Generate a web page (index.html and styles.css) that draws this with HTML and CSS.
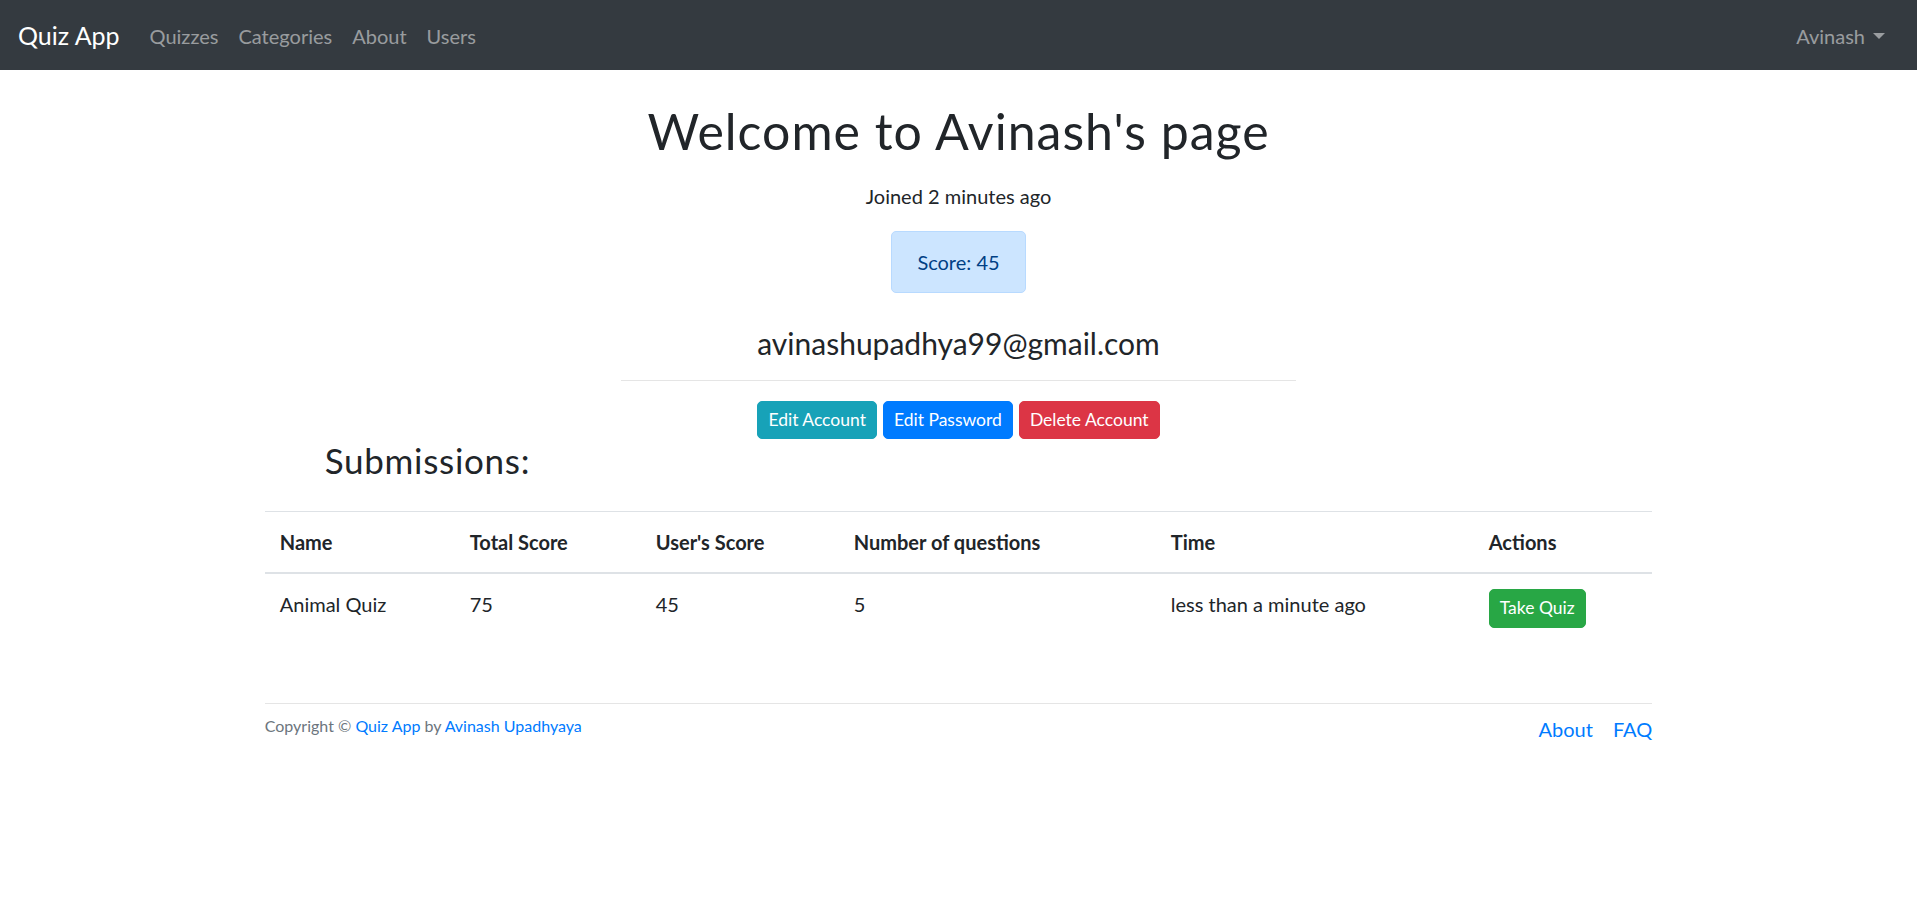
FILE: index.html
```html
<!DOCTYPE html>
<html lang="en">
<head>
<meta charset="utf-8">
<title>Quiz App - Avinash</title>
<link rel="stylesheet" href="styles.css">
</head>
<body>
<nav class="navbar">
  <a class="navbar-brand" href="#">Quiz App</a>
  <ul class="navbar-nav">
    <li><a class="nav-link" href="#">Quizzes</a></li>
    <li><a class="nav-link" href="#">Categories</a></li>
    <li><a class="nav-link" href="#">About</a></li>
    <li><a class="nav-link" href="#">Users</a></li>
  </ul>
  <div class="navbar-user">
    <a class="nav-link dropdown-toggle" href="#">Avinash</a>
  </div>
</nav>

<div class="container">
  <div class="profile">
    <h1 class="profile-title">Welcome to Avinash's page</h1>
    <p class="profile-joined">Joined 2 minutes ago</p>
    <div class="score-alert">Score: 45</div>
    <h4 class="profile-email">avinashupadhya99@gmail.com</h4>
    <hr class="profile-divider">
    <div class="profile-actions">
      <a class="btn btn-info" href="#">Edit Account</a>
      <a class="btn btn-primary" href="#">Edit Password</a>
      <a class="btn btn-danger" href="#">Delete Account</a>
    </div>
  </div>

  <h3 class="submissions-title">Submissions:</h3>

  <table class="table">
    <colgroup>
      <col class="col-name">
      <col class="col-total">
      <col class="col-user">
      <col class="col-count">
      <col class="col-time">
      <col class="col-actions">
    </colgroup>
    <thead>
      <tr>
        <th>Name</th>
        <th>Total Score</th>
        <th>User's Score</th>
        <th>Number of questions</th>
        <th>Time</th>
        <th>Actions</th>
      </tr>
    </thead>
    <tbody>
      <tr>
        <td>Animal Quiz</td>
        <td>75</td>
        <td>45</td>
        <td>5</td>
        <td>less than a minute ago</td>
        <td><a class="btn btn-success" href="#">Take Quiz</a></td>
      </tr>
    </tbody>
  </table>

  <footer class="footer">
    <small class="copyright">Copyright © <a href="#">Quiz App</a> by <a href="#">Avinash Upadhyaya</a></small>
    <nav class="footer-links">
      <a href="#">About</a>
      <a href="#">FAQ</a>
    </nav>
  </footer>
</div>
</body>
</html>
```

FILE: styles.css
```css
html {
  font-size: 20px;
}

body {
  margin: 0;
  font-family: Lato, "Open Sans", "Noto Sans", sans-serif;
  font-size: 20px;
  line-height: 1.5;
  color: #212529;
  background: #fff;
}

a {
  text-decoration: none;
}

/* Navbar */
.navbar {
  display: flex;
  align-items: center;
  height: 70px;
  padding: 2px 22px 0 18px;
  box-sizing: border-box;
  background: #343a40;
}

.navbar-brand {
  font-size: 25px;
  line-height: 37.5px;
  color: #fff;
  margin-right: 20px;
}

.navbar-nav {
  display: flex;
  list-style: none;
  margin: 0;
  padding: 0;
}

.nav-link {
  display: block;
  padding: 10px;
  line-height: 30px;
  color: rgba(255, 255, 255, 0.5);
}

.navbar-user {
  margin-left: auto;
}

.dropdown-toggle::after {
  content: "";
  display: inline-block;
  margin-left: 8px;
  vertical-align: 5px;
  border-top: 6px solid;
  border-right: 6px solid transparent;
  border-left: 6px solid transparent;
}

/* Layout */
.container {
  width: 1425px;
  margin: 0 auto;
  padding: 31px 18.75px 0;
  box-sizing: border-box;
}

.profile {
  width: 675px;
  margin: 0 auto;
  text-align: center;
}

.profile-title {
  font-size: 50px;
  line-height: 1.2;
  font-weight: 400;
  letter-spacing: 1px;
  margin: 0 0 20px;
}

.profile-joined {
  margin: 0 0 20px;
}

.score-alert {
  width: fit-content;
  margin: 0 auto 32px;
  padding: 15px 25px;
  border: 1px solid #b8daff;
  border-radius: 5px;
  background: #cce5ff;
  color: #004085;
}

.profile-email {
  font-size: 30px;
  line-height: 1.2;
  font-weight: 400;
  margin: 0 0 10px;
}

.profile-divider {
  margin: 19px 0 20px;
  border: 0;
  border-top: 1px solid rgba(0, 0, 0, 0.1);
}

.profile-actions {
  display: flex;
  justify-content: center;
  gap: 6px;
}

/* Buttons */
.btn {
  display: inline-block;
  font-size: 17.5px;
  line-height: 1.5;
  padding: 5px 10px;
  border: 1px solid transparent;
  border-radius: 5px;
  color: #fff;
}

.btn-info {
  background: #17a2b8;
  border-color: #17a2b8;
}

.btn-primary {
  background: #007bff;
  border-color: #007bff;
}

.btn-danger {
  background: #dc3545;
  border-color: #dc3545;
}

.btn-success {
  background: #28a745;
  border-color: #28a745;
}

/* Submissions */
.submissions-title {
  font-size: 35px;
  line-height: 1.2;
  font-weight: 400;
  letter-spacing: 0.7px;
  margin: 0 0 30px 60px;
}

.table {
  width: 100%;
  margin: 0;
  border-collapse: collapse;
  table-layout: fixed;
  color: #212529;
}

.col-name { width: 190px; }
.col-total { width: 186px; }
.col-user { width: 198px; }
.col-count { width: 317px; }
.col-time { width: 318px; }

.table th,
.table td {
  padding: 15px;
  text-align: left;
  vertical-align: top;
  border-top: 1px solid #dee2e6;
}

.table thead th {
  vertical-align: bottom;
  font-weight: 700;
  border-bottom: 2px solid #dee2e6;
}

/* Footer */
.footer {
  display: flex;
  justify-content: space-between;
  align-items: flex-start;
  margin-top: 60px;
  padding-top: 10px;
  border-top: 1px solid rgba(0, 0, 0, 0.1);
}

.copyright {
  font-size: 16px;
  line-height: 24px;
  color: #6c757d;
}

.copyright a,
.footer-links a {
  color: #007bff;
}

.footer-links {
  display: flex;
  gap: 20px;
  line-height: 30px;
}
```
